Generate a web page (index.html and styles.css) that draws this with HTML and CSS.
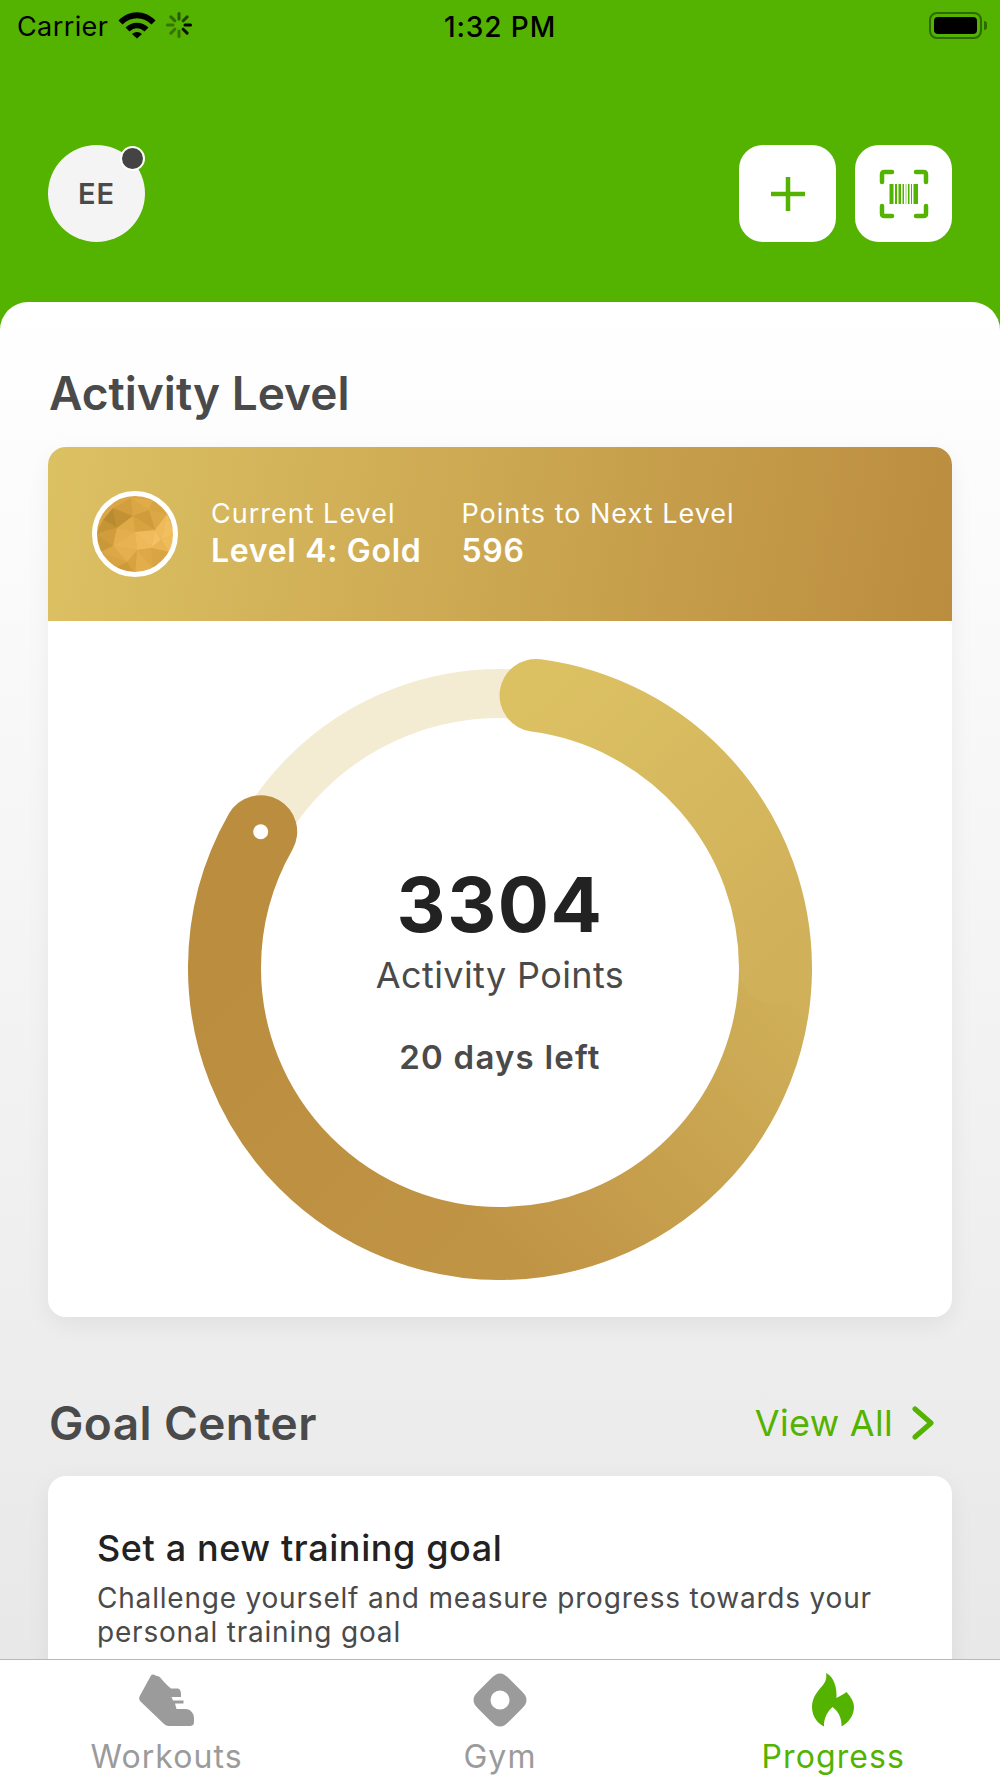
FILE: index.html
```html
<!DOCTYPE html>
<html lang="en">
<head>
  <meta charset="UTF-8" />
  <title>Progress</title>
  <link rel="stylesheet" href="styles.css">
</head>
<body>
  <div class="app">
    <div class="status-bar">
      <div class="status-left">
        <span class="status-text">Carrier</span>
        <svg class="wifi" width="38" height="28" viewBox="0 0 38 28">
          <path d="M0.5 9.5C11 -1.5 27 -1.5 37.5 9.5L33.5 13.5C25 5 13 5 4.500 13.500Z" />
          <path d="M7.500 16.500C14 10 24 10 30.500 16.500L26.500 20.500C22 16 16 16 11.500 20.500Z" />
          <path d="M14 23C17 20.200 21 20.200 24 23L19 27.500Z" />
        </svg>
        <svg class="spinner" width="26" height="26" viewBox="0 0 26 26">
          <g stroke="#000" stroke-width="3" stroke-linecap="round">
            <path d="M13 1.500V7" opacity="0.5" />
            <path d="M21.100 4.900L17.200 8.800" opacity="0.6" />
            <path d="M24.500 13H19" />
            <path d="M21.100 21.100L17.200 17.200" opacity="0.9" />
            <path d="M13 24.500V19" opacity="0.35" />
            <path d="M4.900 21.100L8.800 17.200" opacity="0.35" />
            <path d="M1.500 13H7" opacity="0.35" />
            <path d="M4.900 4.900L8.800 8.800" opacity="0.4" />
          </g>
        </svg>
      </div>
      <div class="status-time">1:32 PM</div>
      <div class="battery">
        <div class="battery-body"><div class="battery-fill"></div></div>
        <div class="battery-nub"></div>
      </div>
    </div>

    <div class="top-bar">
      <div class="avatar">EE<span class="avatar-dot"></span></div>
      <div class="top-actions">
        <div class="square-btn">
          <svg width="36" height="36" viewBox="0 0 36 36" fill="none" stroke="#54b200" stroke-width="4.500">
            <path d="M18 1V35M1 18H35" />
          </svg>
        </div>
        <div class="square-btn">
          <svg width="50" height="50" viewBox="0 0 50 50" fill="none">
            <g stroke="#54b200" stroke-width="4.500" stroke-linecap="round" stroke-linejoin="round">
              <path d="M3 13V5.500Q3 3 5.500 3H13" />
              <path d="M37 3H44.500Q47 3 47 5.500V13" />
              <path d="M47 37V44.500Q47 47 44.500 47H37" />
              <path d="M13 47H5.500Q3 47 3 44.500V37" />
            </g>
            <g fill="#54b200">
              <rect x="10.500" y="15" width="4" height="20" />
              <rect x="16" y="15" width="2" height="20" />
              <rect x="19.500" y="15" width="2.500" height="20" />
              <rect x="23.500" y="15" width="1.500" height="20" />
              <rect x="26.500" y="15" width="1" height="20" opacity="0.6" />
              <rect x="29" y="15" width="1.500" height="20" />
              <rect x="32" y="15" width="1" height="20" />
              <rect x="34.500" y="15" width="4.500" height="20" />
            </g>
          </svg>
        </div>
      </div>
    </div>

    <div class="sheet">
      <h2 class="section-title">Activity Level</h2>
      <div class="card level-card">
        <div class="level-banner">
          <svg class="medal" width="88" height="88" viewBox="0 0 88 88">
            <defs>
              <clipPath id="medalClip"><circle cx="44" cy="44" r="39" /></clipPath>
            </defs>
            <g clip-path="url(#medalClip)">
              <rect width="88" height="88" fill="#dba645" />
              <polygon points="12,30 22,18 26,38" fill="#b98b30" />
              <polygon points="5,44 12,30 26,38" fill="#c49435" />
              <polygon points="22,18 40,8 42,26" fill="#d39f3e" />
              <polygon points="22,18 42,26 26,38" fill="#c29133" />
              <polygon points="40,8 62,10 58,20" fill="#e0ab49" />
              <polygon points="40,8 58,20 42,26" fill="#dba644" />
              <polygon points="62,10 76,24 58,20" fill="#d8a442" />
              <polygon points="76,24 64,40 58,20" fill="#dca746" />
              <polygon points="76,24 84,44 70,50" fill="#f2bf60" />
              <polygon points="76,24 70,50 64,40" fill="#efba5a" />
              <polygon points="42,26 58,20 64,40" fill="#cf9c3c" />
              <polygon points="42,26 64,40 44,42" fill="#d7a341" />
              <polygon points="26,38 42,26 44,42" fill="#dfaa48" />
              <polygon points="5,44 26,38 22,56" fill="#d09c3c" />
              <polygon points="5,44 22,56 10,62" fill="#c99838" />
              <polygon points="26,38 44,42 22,56" fill="#e3ae4d" />
              <polygon points="44,42 46,60 22,56" fill="#e8b252" />
              <polygon points="44,42 60,58 46,60" fill="#efb95a" />
              <polygon points="44,42 64,40 60,58" fill="#f0bb5c" />
              <polygon points="64,40 70,50 60,58" fill="#f3c063" />
              <polygon points="70,50 84,44 78,62" fill="#f0bb5a" />
              <polygon points="70,50 78,62 60,58" fill="#e9b454" />
              <polygon points="60,58 78,62 62,78" fill="#d9a544" />
              <polygon points="46,60 60,58 62,78" fill="#dda846" />
              <polygon points="46,60 62,78 44,84" fill="#e2ad4b" />
              <polygon points="36,72 46,60 44,84" fill="#d6a242" />
              <polygon points="22,56 46,60 36,72" fill="#e4af4e" />
              <polygon points="10,62 22,56 36,72" fill="#dca746" />
              <polygon points="10,62 36,72 24,78" fill="#d8a443" />
              <polygon points="24,78 36,72 44,84" fill="#cd9a3a" />
            </g>
            <circle cx="44" cy="44" r="40.500" fill="none" stroke="#fff" stroke-width="5" />
          </svg>
          <div class="level-stat level-stat-current">
            <div class="level-label">Current Level</div>
            <div class="level-value">Level 4: Gold</div>
          </div>
          <div class="level-stat">
            <div class="level-label">Points to Next Level</div>
            <div class="level-value">596</div>
          </div>
        </div>
        <div class="ring-wrap">
          <div class="ring">
            <svg width="640" height="640" viewBox="0 0 640 640" fill="none">
              <defs>
                <linearGradient id="ringGoldA" gradientUnits="userSpaceOnUse" x1="356" y1="47" x2="595" y2="320">
                  <stop offset="0" stop-color="#dcc163" />
                  <stop offset="1" stop-color="#d0b059" />
                </linearGradient>
                <linearGradient id="ringGoldB" gradientUnits="userSpaceOnUse" x1="595" y1="320" x2="320" y2="595">
                  <stop offset="0" stop-color="#d0b059" />
                  <stop offset="1" stop-color="#c09445" />
                </linearGradient>
                <linearGradient id="ringGoldC" gradientUnits="userSpaceOnUse" x1="320" y1="595" x2="45" y2="320">
                  <stop offset="0" stop-color="#c09445" />
                  <stop offset="1" stop-color="#bb8d3f" />
                </linearGradient>
              </defs>
              <circle cx="320" cy="320" r="274.500" stroke="#f4ecd2" stroke-width="49" />
              <g stroke-width="73" stroke-linecap="round">
                <path d="M44.500 320A275.500 275.500 0 0 1 80.700 183.700" stroke="#bb8d3f" />
                <path d="M320 595.500A275.500 275.500 0 0 1 44.500 320" stroke="url(#ringGoldC)" />
                <path d="M595.500 320A275.500 275.500 0 0 1 320 595.500" stroke="url(#ringGoldB)" />
                <path d="M356 47.400A275.500 275.500 0 0 1 595.500 320" stroke="url(#ringGoldA)" />
              </g>
              <circle cx="80.700" cy="183.700" r="7.500" fill="#fff" />
            </svg>
            <div class="ring-text">
              <div class="ring-points">3304</div>
              <div class="ring-label">Activity Points</div>
              <div class="ring-days">20 days left</div>
            </div>
          </div>
        </div>
      </div>

      <div class="goal-head">
        <h2 class="section-title">Goal Center</h2>
        <div class="view-all">
          <span>View All</span>
          <svg width="22" height="34" viewBox="0 0 22 34" fill="none" stroke="#54b200" stroke-width="5" stroke-linecap="round" stroke-linejoin="round">
            <path d="M3 3L19 17L3 31" />
          </svg>
        </div>
      </div>
      <div class="card goal-card">
        <div class="goal-title">Set a new training goal</div>
        <div class="goal-text">Challenge yourself and measure progress towards your personal training goal</div>
      </div>
    </div>

    <div class="tab-bar">
      <div class="tab">
        <svg class="shoe" width="56" height="54" viewBox="0 0 56 54" fill="#9b9b9b">
          <path d="M13 2.500C14 1 16 1 17.500 2.500L21 3.500C24 6 28 12 33 15.500H39C42 15.500 43 18 43 21V24H33.500L35 27.500H45.500V30.500H37L38.500 36H48C52 36 56 40 56 45V49C56 52 54 53 52 53H31C28.500 53 27 52 25 50L3 29C1 27 0.500 25 2 22.500Z" />
        </svg>
        <span>Workouts</span>
      </div>
      <div class="tab">
        <svg width="54" height="54" viewBox="0 0 54 54" fill="#9b9b9b">
          <path fill-rule="evenodd" d="M27 0.500C30.500 0.500 33 2.500 36 5.500L48.500 18C51.500 21 53.500 23.500 53.500 27C53.500 30.500 51.500 33 48.500 36L36 48.500C33 51.500 30.500 53.500 27 53.500C23.500 53.500 21 51.500 18 48.500L5.500 36C2.500 33 0.500 30.500 0.500 27C0.500 23.500 2.500 21 5.500 18L18 5.500C21 2.500 23.500 0.500 27 0.500ZM27 17.500A9.500 9.500 0 1 0 27 36.500A9.500 9.500 0 1 0 27 17.500Z" />
        </svg>
        <span>Gym</span>
      </div>
      <div class="tab tab-active">
        <svg width="44" height="54" viewBox="0 0 44 54" fill="#54b200">
          <path d="M15 0C23 4 26 14 25.500 25C29 23 33 21 35.500 19C40 24 43 29 43 34C43 43 37 50 30.500 53.500C31 45 27 38 21.500 34C17 38 12.500 45 13 53.500C6 50 1 43 1 34C1 24 7 18 12 12C14.500 9 16 5 15 0Z" />
        </svg>
        <span>Progress</span>
      </div>
    </div>
  </div>
</body>
</html>
```

FILE: styles.css
```css
* {
  box-sizing: border-box;
}

body {
  margin: 0;
  font-family: Inter, "Liberation Sans", sans-serif;
  color: #4a4a4a;
}

.app {
  width: 1000px;
  height: 1778px;
  overflow: hidden;
  display: flex;
  flex-direction: column;
  background: #54b200;
}

/* Status bar */
.status-bar {
  height: 50px;
  padding: 0 13px 0 17px;
  display: flex;
  align-items: center;
  justify-content: space-between;
  position: relative;
  color: #000;
  font-size: 27px;
}

.status-left {
  display: flex;
  align-items: center;
  gap: 10px;
}

.status-text {
  padding-top: 3px;
  letter-spacing: 0.4px;
}

.wifi {
  fill: #000;
}

.status-time {
  position: absolute;
  left: 0;
  right: 0;
  padding-top: 3px;
  text-align: center;
  font-size: 28px;
  font-weight: 500;
  letter-spacing: 0.9px;
}

.battery {
  display: flex;
  align-items: center;
  gap: 2px;
}

.battery-body {
  width: 53px;
  height: 27px;
  border: 2px solid #2f6a00;
  border-radius: 8px;
  padding: 3px;
}

.battery-fill {
  height: 100%;
  background: #000;
  border-radius: 4px;
}

.battery-nub {
  width: 3px;
  height: 9px;
  background: #2f6a00;
  border-radius: 0 3px 3px 0;
}

/* Top bar */
.top-bar {
  height: 252px;
  padding: 95px 48px 0;
  display: flex;
  align-items: flex-start;
  justify-content: space-between;
}

.avatar {
  width: 97px;
  height: 97px;
  border-radius: 50%;
  background: #f4f4f4;
  color: #4a4a4a;
  font-size: 29px;
  font-weight: 600;
  letter-spacing: 1px;
  display: flex;
  align-items: center;
  justify-content: center;
  position: relative;
}

.avatar-dot {
  position: absolute;
  top: 1px;
  right: 0;
  width: 25px;
  height: 25px;
  border-radius: 50%;
  background: #444;
  border: 2px solid #fff;
}

.top-actions {
  display: flex;
  gap: 19px;
}

.square-btn {
  width: 97px;
  height: 97px;
  border-radius: 24px;
  background: #fff;
  display: flex;
  align-items: center;
  justify-content: center;
}

/* Sheet */
.sheet {
  flex: 1;
  min-height: 0;
  overflow: hidden;
  padding: 0 48px;
  border-radius: 28px 28px 0 0;
  background: linear-gradient(#fff, #e8e8e8);
}

.section-title {
  margin: 0 0 0 1px;
  font-size: 46px;
  line-height: 56px;
  font-weight: 600;
  color: #4a4a4a;
}

.sheet > .section-title {
  margin-top: 63px;
  margin-bottom: 26px;
}

.goal-head .section-title {
  letter-spacing: 0.4px;
}

.card {
  background: #fff;
  border-radius: 18px;
  overflow: hidden;
  box-shadow: 0 8px 24px rgba(0, 0, 0, 0.06);
}

/* Level card */
.level-card {
  height: 870px;
}

.level-banner {
  height: 174px;
  padding: 0 0 0 43px;
  display: flex;
  align-items: center;
  color: #fff;
  background: linear-gradient(100deg, #dcc163 0%, #bb8d3f 100%);
}

.medal {
  flex: none;
}

.level-stat {
  margin-top: -2px;
}

.level-stat-current {
  margin-left: 32px;
  margin-right: 40px;
}

.level-label {
  font-size: 27px;
  line-height: 36px;
  letter-spacing: 1px;
}

.level-value {
  font-size: 32px;
  line-height: 38px;
  font-weight: 600;
  letter-spacing: 0.7px;
}

.ring-wrap {
  display: flex;
  justify-content: center;
  padding-top: 27px;
}

.ring {
  width: 640px;
  height: 640px;
  position: relative;
}

.ring-text {
  position: absolute;
  inset: 0;
  text-align: center;
  padding-top: 213px;
}

.ring-points {
  font-size: 76px;
  line-height: 86px;
  font-weight: 700;
  color: #222;
  letter-spacing: 1.500px;
}

.ring-label {
  margin-top: 5px;
  font-size: 36px;
  line-height: 46px;
  letter-spacing: 0.4px;
}

.ring-days {
  margin-top: 39px;
  font-size: 33px;
  line-height: 40px;
  font-weight: 600;
  letter-spacing: 1.200px;
}

/* Goal center */
.goal-head {
  margin-top: 78px;
  height: 81px;
  display: flex;
  justify-content: space-between;
  align-items: flex-start;
}

.view-all {
  display: flex;
  align-items: center;
  gap: 19px;
  height: 56px;
  padding-right: 18px;
  color: #54b200;
  font-size: 36px;
  letter-spacing: 0.300px;
}

.goal-card {
  padding: 50px 49px;
  height: 300px;
}

.goal-title {
  font-size: 36px;
  line-height: 44px;
  font-weight: 500;
  color: #222;
  letter-spacing: 0.600px;
}

.goal-text {
  margin-top: 12px;
  font-size: 28px;
  line-height: 33.500px;
  letter-spacing: 0.800px;
}

/* Tab bar */
.tab-bar {
  flex: none;
  height: 119px;
  border-top: 1px solid #b8b8b8;
  background: #fff;
  display: flex;
  justify-content: space-around;
  padding-top: 13px;
}

.tab {
  width: 333px;
  display: flex;
  flex-direction: column;
  align-items: center;
  gap: 10px;
  font-size: 32px;
  line-height: 40px;
  letter-spacing: 1.100px;
  color: #9b9b9b;
}

.shoe {
  margin-left: -2px;
}

.tab-active {
  color: #54b200;
}
```
